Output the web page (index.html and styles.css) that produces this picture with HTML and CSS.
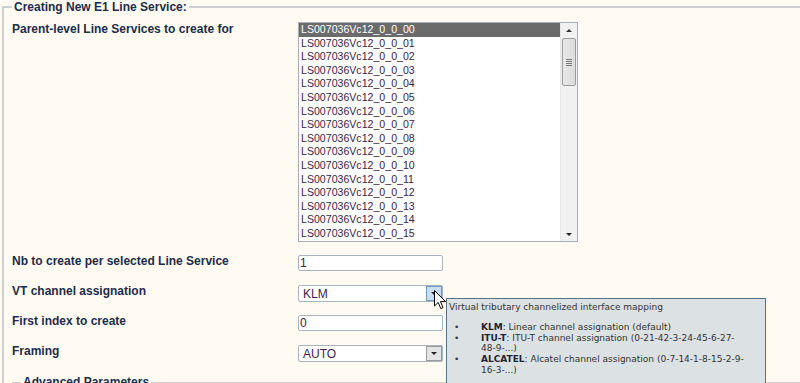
FILE: index.html
```html
<!DOCTYPE html>
<html>
<head>
    <title>Creating New E1 Line Service</title>
    <link rel="stylesheet" href="styles.css">
</head>
<body>
    <fieldset class="main">
        <legend>Creating New E1 Line Service:</legend>

        <div class="row row-list">
            <label class="lbl">Parent-level Line Services to create for</label>
            <div class="listbox">
                <div class="items">
                    <div class="item sel">LS007036Vc12_0_0_00</div>
                    <div class="item">LS007036Vc12_0_0_01</div>
                    <div class="item">LS007036Vc12_0_0_02</div>
                    <div class="item">LS007036Vc12_0_0_03</div>
                    <div class="item">LS007036Vc12_0_0_04</div>
                    <div class="item">LS007036Vc12_0_0_05</div>
                    <div class="item">LS007036Vc12_0_0_06</div>
                    <div class="item">LS007036Vc12_0_0_07</div>
                    <div class="item">LS007036Vc12_0_0_08</div>
                    <div class="item">LS007036Vc12_0_0_09</div>
                    <div class="item">LS007036Vc12_0_0_10</div>
                    <div class="item">LS007036Vc12_0_0_11</div>
                    <div class="item">LS007036Vc12_0_0_12</div>
                    <div class="item">LS007036Vc12_0_0_13</div>
                    <div class="item">LS007036Vc12_0_0_14</div>
                    <div class="item">LS007036Vc12_0_0_15</div>
                </div>
                <div class="vscroll">
                    <div class="sbtn"><span class="tri-up"></span></div>
                    <div class="track">
                        <div class="thumb"><span class="grip"></span></div>
                    </div>
                    <div class="sbtn"><span class="tri-down"></span></div>
                </div>
            </div>
        </div>

        <div class="row">
            <label class="lbl">Nb to create per selected Line Service</label>
            <input class="field" type="text" value="1">
        </div>

        <div class="row">
            <label class="lbl">VT channel assignation</label>
            <div class="combo">
                <span class="combo-val">KLM</span>
                <span class="combo-btn hover"><span class="tri-down"></span></span>
            </div>
        </div>

        <div class="row">
            <label class="lbl">First index to create</label>
            <input class="field" type="text" value="0">
        </div>

        <div class="row">
            <label class="lbl">Framing</label>
            <div class="combo">
                <span class="combo-val">AUTO</span>
                <span class="combo-btn"><span class="tri-down"></span></span>
            </div>
        </div>

        <fieldset class="sub">
            <legend>Advanced Parameters</legend>
        </fieldset>
    </fieldset>

    <div class="tooltip">
        <div class="tip-title">Virtual tributary channelized interface mapping</div>
        <ul class="tip-list">
            <li><span><b>KLM</b>: Linear channel assignation (default)</span></li>
            <li><span><b>ITU-T</b>: ITU-T channel assignation (0-21-42-3-24-45-6-27-<br>48-9-...)</span></li>
            <li><span><b>ALCATEL</b>: Alcatel channel assignation (0-7-14-1-8-15-2-9-<br>16-3-...)</span></li>
        </ul>
    </div>

    <svg class="cursor" width="13" height="20" viewBox="0 0 13 20">
        <path d="M0.5 0.5 L0.5 16 L4.2 12.4 L6.8 18.6 L9 17.6 L6.5 11.6 L11.5 11.6 Z" fill="#fff" stroke="#000" stroke-width="1" stroke-linejoin="miter"/>
    </svg>
</body>
</html>
```

FILE: styles.css
```css
html, body {
    margin: 0;
    height: 100%;
    overflow: hidden;
}
body {
    background: #fffbf2;
    font-family: "Liberation Sans", Arial, sans-serif;
    color: #1c2c4c;
    position: relative;
}

fieldset.main {
    margin: 0 0 0 2px;
    width: 840px;
    border: 2px solid #cfcfcf;
    border-right: none;
    padding: 8px 0 0 8px;
}
legend {
    font-size: 12px;
    font-weight: bold;
    line-height: 14px;
    padding: 0 2px;
    color: #1c2c4c;
}

.row {
    display: flex;
    align-items: flex-start;
    height: 16px;
    margin-bottom: 14px;
}
.row-list {
    height: auto;
    margin-bottom: 13px;
}
.lbl {
    width: 286px;
    margin-top: -1px;
    font-size: 12px;
    font-weight: bold;
    line-height: 15px;
    color: #1c2c4c;
}
.row-list .lbl { margin-top: 0; }

.listbox {
    display: flex;
    width: 278px;
    height: 218px;
    border: 1px solid #a9aeb6;
    background: #fff;
}
.items {
    flex: 1;
    overflow: hidden;
    font-size: 10.6px;
    color: #3b2448;
}
.item {
    height: 13.6px;
    line-height: 13.6px;
    padding-left: 2px;
    white-space: nowrap;
}
.item.sel {
    background: #6b6b6b;
    color: #fff;
}

.vscroll {
    width: 16px;
    display: flex;
    flex-direction: column;
    background: #f1f1f1;
    border-left: 1px solid #e6e6e6;
}
.sbtn {
    height: 14px;
    display: flex;
    align-items: center;
    justify-content: center;
}
.track {
    flex: 1;
    padding: 0 1px;
}
.thumb {
    height: 46px;
    margin-top: 1px;
    border: 1px solid #9c9c9c;
    border-radius: 2px;
    background: linear-gradient(to right, #e9e9e9, #dcdcdc);
    display: flex;
    align-items: center;
    justify-content: center;
}
.grip {
    width: 6px;
    height: 7px;
    background: repeating-linear-gradient(to bottom, #7a7a7a 0, #7a7a7a 1px, transparent 1px, transparent 2px);
}
.tri-up, .tri-down {
    width: 0;
    height: 0;
    border-left: 3px solid transparent;
    border-right: 3px solid transparent;
}
.tri-up { border-bottom: 3px solid #333; }
.tri-down { border-top: 3px solid #222; }

.field {
    box-sizing: border-box;
    width: 145px;
    height: 16px;
    margin: 0;
    padding: 0 1px;
    border: 1px solid #a9b4c2;
    border-radius: 2px;
    background: #fff;
    font-family: "Liberation Sans", Arial, sans-serif;
    font-size: 12px;
    color: #3b2448;
    outline: none;
}

.combo {
    box-sizing: border-box;
    width: 145px;
    height: 17px;
    display: flex;
    align-items: center;
    border: 1px solid #a9b4c2;
    border-radius: 2px;
    background: #fff;
    font-size: 12px;
    color: #3b2448;
}
.combo-val {
    flex: 1;
    padding-left: 4px;
}
.combo-btn {
    box-sizing: border-box;
    width: 16px;
    height: 15px;
    border: 1px solid #9a9a9a;
    background: #e4e4e4;
    display: flex;
    align-items: center;
    justify-content: center;
}
.combo-btn.hover {
    background: #c9def0;
    border-color: #6f9ac0;
}

fieldset.sub {
    margin: 12px 0 0 0;
    padding: 0 0 0 8px;
    border: 1px solid #cfcfcf;
    border-right: none;
    height: 40px;
}

.tooltip {
    position: absolute;
    left: 446px;
    top: 298px;
    width: 318px;
    height: 110px;
    background: #dce1e4;
    border: 1px solid #557489;
    font-family: "DejaVu Sans", Verdana, sans-serif;
    font-size: 9px;
    line-height: 10.75px;
    color: #333;
}
.tip-title {
    padding: 3px 0 0 2px;
}
.tip-list {
    list-style: none;
    margin: 9px 0 0 0;
    padding: 0;
}
.tip-list li {
    display: flex;
    white-space: nowrap;
}
.tip-list li::before {
    content: "\2022";
    width: 34px;
    padding-left: 7px;
    box-sizing: border-box;
    color: #333;
}
.tip-list b { color: #1f2530; }

.cursor {
    position: absolute;
    left: 434px;
    top: 290px;
}
```
